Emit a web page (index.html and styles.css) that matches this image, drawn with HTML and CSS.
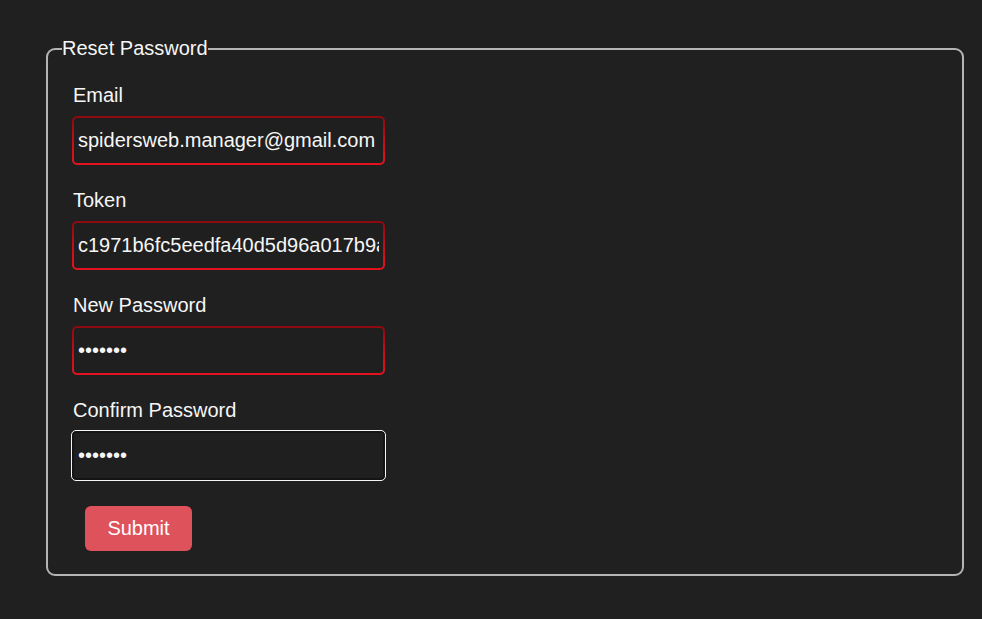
FILE: index.html
```html
<!DOCTYPE html>
<html lang="en">
<head>
<meta charset="utf-8">
<title>Reset Password</title>
<link rel="stylesheet" href="styles.css">
</head>
<body>
<main class="page">
  <form class="reset-form">
    <fieldset class="box">
      <legend class="box-title">Reset Password</legend>
      <div class="field">
        <label class="field-label" for="email">Email</label>
        <input class="field-input invalid" id="email" type="text" value="spidersweb.manager@gmail.com">
      </div>
      <div class="field">
        <label class="field-label" for="token">Token</label>
        <input class="field-input invalid" id="token" type="text" value="c1971b6fc5eedfa40d5d96a017b9a3e2f">
      </div>
      <div class="field">
        <label class="field-label" for="pw">New Password</label>
        <input class="field-input invalid" id="pw" type="password" value="1234567">
      </div>
      <div class="field">
        <label class="field-label" for="pw2">Confirm Password</label>
        <input class="field-input focused" id="pw2" type="password" value="1234567">
      </div>
      <div class="actions">
        <button class="submit" type="button">Submit</button>
      </div>
    </fieldset>
  </form>
</main>
</body>
</html>
```
FILE: styles.css
```css
html, body {
  margin: 0;
  padding: 0;
  background: #202020;
  color: #f4f4f4;
  font-family: "Liberation Sans", Arial, sans-serif;
}

.page {
  padding: 37px 18px 0 46px;
}

.reset-form {
  margin: 0;
}

.box {
  margin: 0;
  border: 2px solid #b4b4b4;
  border-radius: 9px;
  padding: 24px 24px 23px 14px;
  display: flex;
  flex-direction: column;
}

.box-title {
  padding: 0;
  margin-left: 0;
  font-size: 20px;
  line-height: 23px;
  color: #f6f6f6;
}

.field {
  display: flex;
  flex-direction: column;
  align-items: flex-start;
  margin-bottom: 24px;
  padding-left: 10px;
}

.field-label {
  font-size: 20px;
  line-height: 23px;
  margin-left: 1px;
  margin-bottom: 9px;
  color: #f6f6f6;
}

.field-input {
  box-sizing: border-box;
  width: 313px;
  height: 49px;
  margin: 0;
  padding: 0 4px;
  font-family: "Liberation Sans", Arial, sans-serif;
  font-size: 20px;
  color: #f6f6f6;
  border-radius: 5px;
  outline: none;
}

.field-input.invalid {
  border: 2px solid transparent;
  background:
    linear-gradient(#1f1f1f, #1f1f1f) padding-box,
    linear-gradient(#8a0a10, #c8101a 60%, #e3131e) border-box;
}

.field-input.focused {
  border: 2px solid #141414;
  background: #1f1f1f;
  outline: 1px solid #f4f4f4;
  outline-offset: 0;
  border-radius: 4px;
}

.actions {
  padding-left: 23px;
  margin-top: 2px;
}

.submit {
  width: 107px;
  height: 45px;
  border: none;
  border-radius: 6px;
  background: #dd525b;
  color: #ffffff;
  font-family: "Liberation Sans", Arial, sans-serif;
  font-size: 20px;
  padding: 0;
  cursor: pointer;
}
```
